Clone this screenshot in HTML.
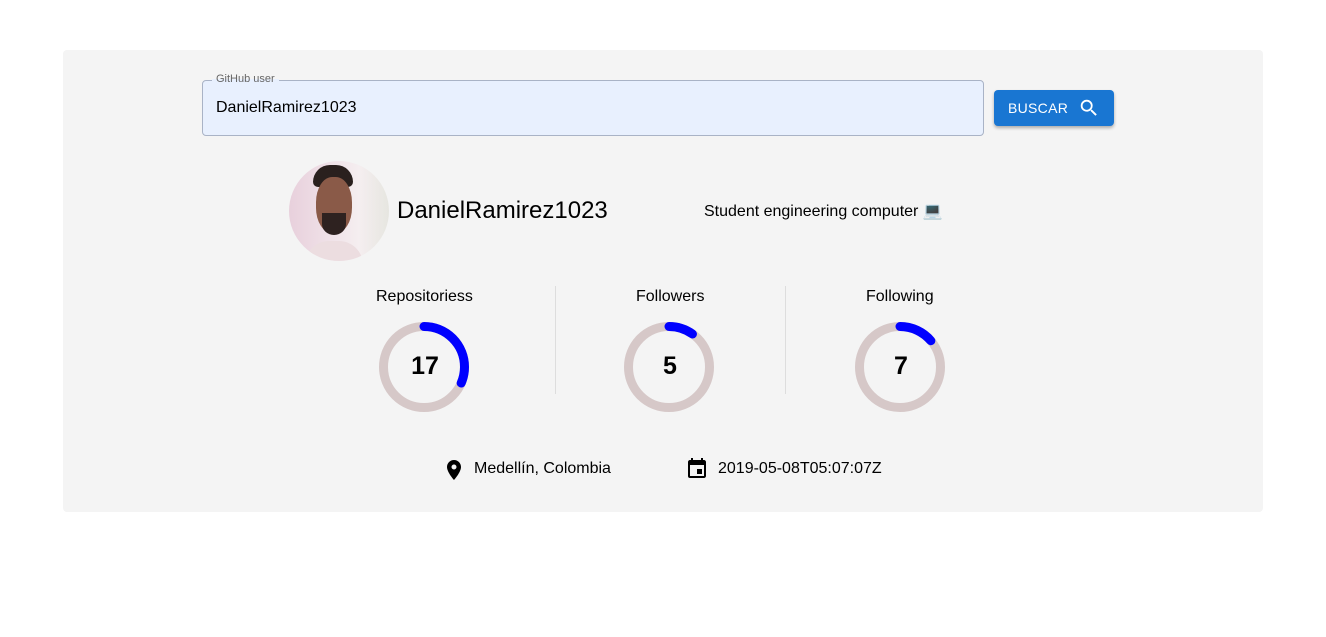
<!DOCTYPE html>
<html><head><meta charset="utf-8"><style>
body{margin:0;background:#fff;font-family:"Liberation Sans",Arial,sans-serif;color:#000}
.card{position:absolute;left:63px;top:50px;width:1200px;height:462px;background:#f4f4f4;border-radius:4px}
.abs{position:absolute}
</style></head><body>
<div class="card"></div>
<div class="abs" style="left:202px;top:80px;width:780px;height:54px;background:#e8f0fe;border:1px solid #a9b3c6;border-radius:4px"></div>
<div class="abs" style="left:212px;top:73px;padding:0 4px;font-size:11px;color:#666;background:linear-gradient(#f4f4f4 50%,#e8f0fe 50%)">GitHub user</div>
<div class="abs" style="left:216px;top:99px;font-size:16px">DanielRamirez1023</div>
<div class="abs" style="left:994px;top:90px;width:120px;height:36px;background:#1976d2;border-radius:4px;box-shadow:0 2px 3px rgba(0,0,0,.3);color:#fff;font-size:14px;line-height:36px">
<span style="position:absolute;left:14px;letter-spacing:.3px">BUSCAR</span>
<svg style="position:absolute;left:84px;top:7px" width="22" height="22" viewBox="0 0 24 24"><path fill="#fff" d="M15.5 14h-.79l-.28-.27A6.47 6.47 0 0 0 16 9.5 6.5 6.5 0 1 0 9.5 16c1.61 0 3.09-.59 4.230-1.57l.27.28v.79l5 4.99L20.49 19l-4.99-5zm-6 0C7.01 14 5 11.99 5 9.5S7.01 5 9.5 5 14 7.01 14 9.5 11.99 14 9.5 14z"/></svg></div>
<div class="abs" style="left:289px;top:161px;width:100px;height:100px;border-radius:50%;background:linear-gradient(90deg,#e8d0dc,#f5eef0 70%,#e6e6e0);overflow:hidden">
<div style="position:absolute;left:24px;top:4px;width:40px;height:22px;background:#2a201e;border-radius:20px 20px 6px 6px"></div>
<div style="position:absolute;left:27px;top:16px;width:36px;height:56px;background:#8a5a48;border-radius:45%"></div>
<div style="position:absolute;left:33px;top:52px;width:24px;height:22px;background:#2e2220;border-radius:0 0 50% 50%"></div>
<div style="position:absolute;left:16px;top:80px;width:58px;height:30px;background:#ecdde0;border-radius:24px 24px 0 0"></div></div>
<div class="abs" style="left:397px;top:197px;font-size:24px">DanielRamirez1023</div>
<div class="abs" style="left:704px;top:201px;font-size:16px">Student engineering computer 💻</div>
<div class="abs" style="left:376px;top:288px;font-size:16px">Repositoriess</div>
<div class="abs" style="left:636px;top:288px;font-size:16px">Followers</div>
<div class="abs" style="left:866px;top:288px;font-size:16px">Following</div>
<div class="abs" style="left:555px;top:286px;width:1px;height:108px;background:#ddd"></div>
<div class="abs" style="left:785px;top:286px;width:1px;height:108px;background:#ddd"></div>
<svg class="abs" style="left:0;top:0" width="1326" height="637">
<g fill="none" stroke-width="9">
<circle cx="424" cy="367" r="40.5" stroke="#d6c8c8"/>
<circle cx="669" cy="367" r="40.5" stroke="#d6c8c8"/>
<circle cx="900" cy="367" r="40.5" stroke="#d6c8c8"/>
<g stroke="#0000ff" stroke-linecap="round">
<circle cx="424" cy="367" r="40.5" stroke-dasharray="80 300" transform="rotate(-90 424 367)"/>
<circle cx="669" cy="367" r="40.5" stroke-dasharray="25 300" transform="rotate(-90 669 367)"/>
<circle cx="900" cy="367" r="40.5" stroke-dasharray="35 300" transform="rotate(-90 900 367)"/>
</g></g>
<g font-family="Liberation Sans,Arial,sans-serif" font-weight="bold" font-size="25" text-anchor="middle">
<text x="425" y="374">17</text><text x="670" y="374">5</text><text x="901" y="374">7</text></g>
<path transform="translate(442,458)" d="M12 2C8.13 2 5 5.130 5 9c0 5.25 7 13 7 13s7-7.75 7-13c0-3.87-3.13-7-7-7zm0 9.5a2.5 2.5 0 0 1 0-5 2.5 2.5 0 0 1 0 5z"/>
<path transform="translate(685,457)" d="M17 12h-5v5h5v-5zM16 1v2H8V1H6v2H5c-1.11 0-2 .9-2 2v14a2 2 0 0 0 2 2h14c1.1 0 2-.9 2-2V5c0-1.1-.9-2-2-2h-1V1h-2zm3 18H5V8h14v11z"/>
</svg>
<div class="abs" style="left:474px;top:460px;font-size:16px">Medellín, Colombia</div>
<div class="abs" style="left:718px;top:460px;font-size:16px">2019-05-08T05:07:07Z</div>
</body></html>
